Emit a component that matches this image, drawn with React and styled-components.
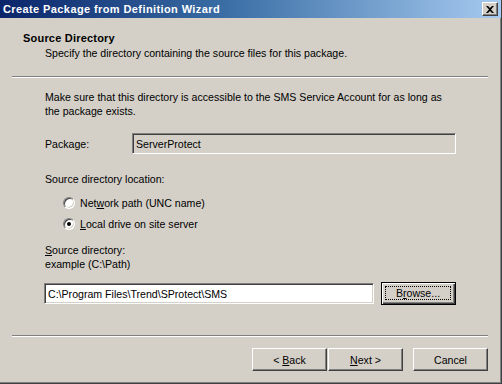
import React from 'react';
import styled, { createGlobalStyle } from 'styled-components';

const GlobalStyle = createGlobalStyle`
  html, body {
    margin: 0;
    padding: 0;
    background: #d4d0c8;
  }
  body {
    font-family: "Liberation Sans", Arial, sans-serif;
    font-size: 10.6px;
    color: #000;
  }
`

const Window = styled.div`
  width: 502px;
  height: 384px;
  box-sizing: border-box;
  display: flex;
  flex-direction: column;
  background: #d4d0c8;
  border-right: 1px solid #404040;
  border-bottom: 1px solid #404040;
  box-shadow: inset -1px -1px 0 #808080;
`

const TitleBar = styled.div`
  height: 18px;
  flex: none;
  display: flex;
  align-items: center;
  justify-content: space-between;
  padding: 0 3px 0 3px;
  background: linear-gradient(to right, #0a246a 0%, #3a6ea5 45%, #a6caf0 100%);
  color: #fff;
  font-weight: bold;
  font-size: 11px;
  letter-spacing: 0.4px;
`

const CloseButton = styled.div`
  width: 16px;
  height: 14px;
  box-sizing: border-box;
  display: flex;
  align-items: center;
  justify-content: center;
  background: #d4d0c8;
  border-top: 1px solid #fff;
  border-left: 1px solid #fff;
  border-right: 1px solid #404040;
  border-bottom: 1px solid #404040;
  box-shadow: inset -1px -1px 0 #808080;
`

const Header = styled.div`
  padding: 13px 0 0 23px;
  line-height: 15px;
`

const HeaderTitle = styled.div`
  font-weight: bold;
  font-size: 11px;
  letter-spacing: 0.2px;
`

const HeaderSub = styled.div`
  padding-left: 22px;
`

const Separator = styled.div`
  height: 0;
  margin: ${p => p.top || 0}px 13px 0 12px;
  border-top: 1px solid #808080;
  border-bottom: 1px solid #fff;
`

const Body = styled.div`
  flex: 1;
  padding: 12px 0 0 45px;
  line-height: 14px;
`

const Para = styled.div`
  margin-top: ${p => p.top || 0}px;
`

const FieldRow = styled.div`
  display: flex;
  align-items: center;
  margin-top: ${p => p.top || 0}px;
  margin-left: ${p => p.shift || 0}px;
`

const FieldLabel = styled.div`
  width: 87px;
`

const Field = styled.div`
  box-sizing: border-box;
  width: ${p => p.width}px;
  height: 21px;
  padding: 3px 0 0 3px;
  background: ${p => (p.disabled ? '#d4d0c8' : '#fff')};
  border-top: 1px solid #808080;
  border-left: 1px solid #808080;
  border-right: 1px solid #fff;
  border-bottom: 1px solid #fff;
  box-shadow: inset 1px 1px 0 #404040, inset -1px -1px 0 #d4d0c8;
  white-space: nowrap;
  line-height: 14px;
`

const RadioRow = styled.label`
  display: flex;
  align-items: center;
  height: 21px;
  margin-left: 18px;
  margin-top: ${p => p.top || 0}px;
  gap: 5px;
`

const RadioCircle = styled.span`
  position: relative;
  width: 12px;
  height: 12px;
  box-sizing: border-box;
  border-radius: 50%;
  background: #fff;
  border: 1px solid;
  border-color: #808080 #fff #fff #808080;
  box-shadow: inset 1px 1px 0 #404040, inset -1px -1px 0 #d4d0c8;

  &::after {
    content: '';
    display: ${p => (p.checked ? 'block' : 'none')};
    position: absolute;
    left: 3px;
    top: 3px;
    width: 4px;
    height: 4px;
    border-radius: 50%;
    background: #000;
  }
`

const Button = styled.div`
  box-sizing: border-box;
  width: 75px;
  height: 23px;
  display: flex;
  align-items: center;
  justify-content: center;
  white-space: pre;
  background: #d4d0c8;
  border-top: 1px solid #fff;
  border-left: 1px solid #fff;
  border-right: 1px solid #404040;
  border-bottom: 1px solid #404040;
  box-shadow: inset -1px -1px 0 #808080;
  margin-left: ${p => p.gap || 0}px;
`

const DefaultButton = styled.div`
  box-sizing: border-box;
  width: 75px;
  height: 23px;
  margin-left: 7px;
  padding: 1px;
  border: 1px solid #000;
  background: #d4d0c8;
  box-shadow: inset 1px 1px 0 #fff, inset -1px -1px 0 #404040, inset -2px -2px 0 #808080;
  display: flex;
`

const FocusRect = styled.div`
  flex: 1;
  margin: 2px 3px 3px 2px;
  border: 1px dotted #000;
  display: flex;
  align-items: center;
  justify-content: center;
`

const Footer = styled.div`
  flex: none;
  padding-bottom: 12px;
`

const ButtonRow = styled.div`
  display: flex;
  justify-content: flex-end;
  padding: 11px 13px 0 0;
`

export default function App() {
  return (
    <>
      <GlobalStyle />
      <Window>
        <TitleBar>
          <span>Create Package from Definition Wizard</span>
          <CloseButton>
            <svg width="8" height="7" viewBox="0 0 8 7">
              <path d="M0 0h2l2 2 2-2h2L5 3.5 8 7H6L4 5 2 7H0l3-3.5z" fill="#000" />
            </svg>
          </CloseButton>
        </TitleBar>
        <Header>
          <HeaderTitle>Source Directory</HeaderTitle>
          <HeaderSub>Specify the directory containing the source files for this package.</HeaderSub>
        </Header>
        <Separator top={15} />
        <Body>
          <Para>
            Make sure that this directory is accessible to the SMS Service Account for as long as
            <br />
            the package exists.
          </Para>
          <FieldRow top={15}>
            <FieldLabel>Package:</FieldLabel>
            <Field width={324} disabled>ServerProtect</Field>
          </FieldRow>
          <Para top={18}>Source directory location:</Para>
          <RadioRow top={6}>
            <RadioCircle />
            <span>Net<u>w</u>ork path (UNC name)</span>
          </RadioRow>
          <RadioRow>
            <RadioCircle checked />
            <span><u>L</u>ocal drive on site server</span>
          </RadioRow>
          <Para top={9}>
            <u>S</u>ource directory:
            <br />
            example (C:\Path)
          </Para>
          <FieldRow top={11} shift={-1}>
            <Field width={330}>C:\Program Files\Trend\SProtect\SMS</Field>
            <DefaultButton>
              <FocusRect>B<u>r</u>owse...</FocusRect>
            </DefaultButton>
          </FieldRow>
        </Body>
        <Footer>
          <Separator />
          <ButtonRow>
            <Button>{'< '}<u>B</u>ack</Button>
            <Button gap={1}><u>N</u>ext{' >'}</Button>
            <Button gap={10}>Cancel</Button>
          </ButtonRow>
        </Footer>
      </Window>
    </>
  );
}
